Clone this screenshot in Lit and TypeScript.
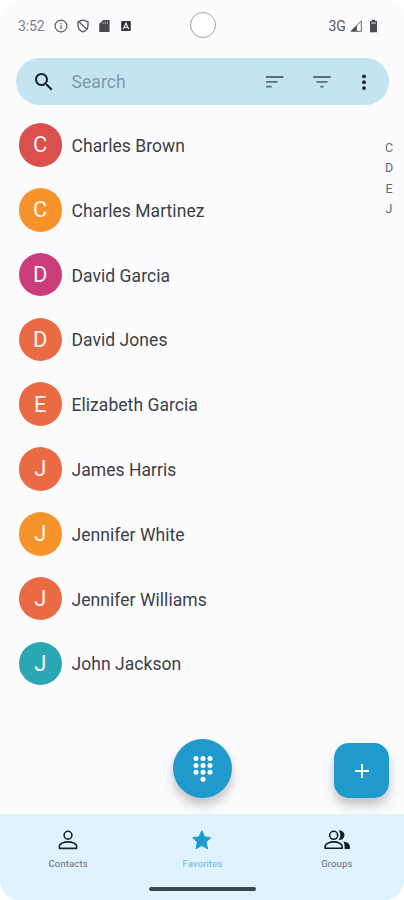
import { LitElement, html, css, svg } from "lit";
import { customElement } from "lit/decorators.js";

interface Contact {
  name: string;
  color: string;
}

const CONTACTS: Contact[] = [
  { name: "Charles Brown", color: "#d9504f" },
  { name: "Charles Martinez", color: "#f6932b" },
  { name: "David Garcia", color: "#cb3c7b" },
  { name: "David Jones", color: "#e96a43" },
  { name: "Elizabeth Garcia", color: "#e96a43" },
  { name: "James Harris", color: "#e96a43" },
  { name: "Jennifer White", color: "#f6932b" },
  { name: "Jennifer Williams", color: "#e96a43" },
  { name: "John Jackson", color: "#2ba6b3" },
];

const KEYPAD = [0, 1, 2].flatMap((r) => [0, 1, 2].map((c) => [4 + c * 7, 3.5 + r * 6.9]));

@customElement("status-bar")
class StatusBar extends LitElement {
  static styles = css`
    :host {
      display: grid;
      grid-template-columns: 1fr 26px 1fr;
      align-items: center;
      height: 50px;
      padding: 0 25px 0 18px;
      font: 14px Roboto, sans-serif;
      color: #808084;
    }
    .left, .right { display: flex; align-items: center; padding-top: 1px; }
    .left svg { display: block; }
    .time { width: 36px; letter-spacing: -0.1px; }
    .icons { display: flex; gap: 7.6px; }
    .right { justify-content: flex-end; color: #56565a; margin-right: 1px; }
    .net { margin-right: 4.500px; letter-spacing: -0.200px; }
    .signal { margin-right: 7px; }
    .camera {
      box-sizing: border-box;
      width: 26px;
      height: 26px;
      border: 1px solid #a2a2a5;
      border-radius: 50%;
      background: #fff;
    }
    :host { grid-template-columns: 172px 26px 1fr; }
  `;
  render() {
    return html`
      <div class="left">
        <span class="time">3:52</span>
        <span class="icons">
          <svg width="14" height="14" viewBox="0 0 14 14" fill="none" stroke="#5c5c60" stroke-width="1.2">
            <circle cx="7" cy="7" r="5.9" /><path d="M7 6.3V10M7 3.9v1.3" />
          </svg>
          <svg width="14" height="14" viewBox="0 0 14 14" fill="none" stroke="#55555a" stroke-width="1.3">
            <path d="M7 1L12 2.8V6.6C12 9.6 9.8 12 7 13C4.2 12 2 9.6 2 6.6V2.8ZM3 2.8L11 10.6" />
          </svg>
          <svg width="14" height="14" viewBox="0 0 14 14">
            <path fill="#4a4a4e" d="M6 1h5.6c.6 0 1 .4 1 1v10c0 .6-.4 1-1 1H3.200c-.6 0-1-.4-1-1V5z" />
            <path stroke="#a5a5a8" stroke-width=".9" d="M6 2.700v2.300M8.200 2.700v2.300M10.400 2.700v2.300" />
          </svg>
          <svg width="14" height="14" viewBox="0 0 14 14">
            <rect x="2.200" y="2" width="9.600" height="10" rx="1" fill="#333337" />
            <path d="M4.300 10.200L7 4l2.700 6.200M5.200 8.300h3.600" fill="none" stroke="#e6e6e8" stroke-width="1.200" />
          </svg>
        </span>
      </div>
      <div class="camera"></div>
      <div class="right">
        <span class="net">3G</span>
        <svg class="signal" width="12" height="12" viewBox="0 0 12 12">
          <path d="M11.300 .9V11.300H1Z" fill="none" stroke="#66666a" stroke-width="1" />
          <path d="M6.800 5.500V11.300H1Z" fill="#4a4a4e" />
        </svg>
        <svg width="9" height="14" viewBox="0 0 9 14">
          <path d="M2.800 .7h3.400V2H8v11.200H1V2h1.800z" fill="#4a4a4e" />
          <path d="M2.200 3.300h4.600v1.400H2.200z" fill="#bcbcbf" />
        </svg>
      </div>
    `;
  }
}

@customElement("search-bar")
class SearchBar extends LitElement {
  static styles = css`
    :host {
      display: flex;
      align-items: center;
      height: 47px;
      margin: 0 15px 0 16px;
      padding: 0 13.500px 0 15.500px;
      box-sizing: border-box;
      border-radius: 24px;
      background: #c3e4f0;
      font-family: Roboto, sans-serif;
    }
    svg { display: block; flex: none; }
    .hint { flex: 1; margin-left: 16px; font-size: 17.500px; color: #7d9ba8; letter-spacing: 0.100px; padding-top: 1px; }
    .filter { margin: 0 17.500px 0 23.500px; }
  `;
  render() {
    return html`
      <svg width="24" height="24" viewBox="0 0 24 24" fill="#17232b">
        <path d="M15.500 14h-.79l-.28-.27C15.410 12.590 16 11.110 16 9.500 16 5.910 13.090 3 9.500 3S3 5.910 3 9.500 5.910 16 9.500 16c1.610 0 3.090-.59 4.230-1.570l.27.28v.79l5 4.990L20.490 19l-4.990-5zm-6 0C7.010 14 5 11.990 5 9.500S7.010 5 9.500 5 14 7.010 14 9.500 11.990 14 9.500 14z" />
      </svg>
      <span class="hint">Search</span>
      <svg width="24" height="24" viewBox="0 0 24 24" fill="#56717e">
        <path d="M3 6h17.500v2H3zM3 11h11.500v1.800H3zM3 15.700h5.700v1.800H3z" />
      </svg>
      <svg class="filter" width="24" height="24" viewBox="0 0 24 24" fill="#56717e">
        <path d="M3.200 6h17.600v2H3.200zM6.500 11h11v1.800h-11zM10.300 15.700h3.400v1.800h-3.400z" />
      </svg>
      <svg width="24" height="24" viewBox="0 0 24 24" fill="#17232b">
        <circle cx="12" cy="6.300" r="1.900" /><circle cx="12" cy="12.200" r="1.900" /><circle cx="12" cy="18.100" r="1.900" />
      </svg>
    `;
  }
}

@customElement("contact-row")
class ContactRow extends LitElement {
  static properties = { name: {}, color: {} };
  declare name: string;
  declare color: string;
  static styles = css`
    :host {
      display: flex;
      align-items: center;
      height: 64.800px;
      padding-left: 18.500px;
      font-family: Roboto, sans-serif;
      color: #3c3f46;
    }
    .avatar {
      display: grid;
      place-items: center;
      width: 43.500px;
      height: 43.500px;
      border-radius: 50%;
      color: #fff5f2;
      font-size: 22px;
    }
    .name { margin-left: 9.500px; padding-top: 2px; font-size: 17.500px; letter-spacing: 0.050px; }
  `;
  render() {
    return html`
      <span class="avatar" style="background:${this.color}">${this.name[0]}</span>
      <span class="name">${this.name}</span>
    `;
  }
}

@customElement("nav-bar")
class NavBar extends LitElement {
  static styles = css`
    :host {
      display: flex;
      flex-direction: column;
      align-items: center;
      height: 86px;
      background: #dff2ff;
      font-family: Roboto, sans-serif;
    }
    .tabs { display: grid; grid-template-columns: repeat(3, 1fr); width: 100%; height: 73px; padding-left: 1px; box-sizing: border-box; }
    .tab {
      display: flex;
      flex-direction: column;
      align-items: center;
      padding-top: 13px;
      gap: 4px;
      font-size: 9.500px;
      line-height: 14px;
      letter-spacing: 0.150px;
      color: #626f78;
    }
    .tab.active { color: #6db7da; }
    svg { display: block; overflow: visible; }
    .handle { width: 107px; height: 3.500px; border-radius: 2px; background: #3c464e; margin-left: 1px; }
  `;
  render() {
    return html`
      <div class="tabs">
        <div class="tab">
          <svg width="26" height="26" viewBox="0 0 26 26" fill="none" stroke="#1b262e" stroke-width="1.600">
            <circle cx="13" cy="8.200" r="3.900" />
            <path d="M4.400 21.400v-2.200c0-2.800 4.700-4.300 8.600-4.300s8.600 1.500 8.600 4.300v2.200z" />
          </svg>
          <span>Contacts</span>
        </div>
        <div class="tab active">
          <svg width="26" height="26" viewBox="0 0 26 26" fill="#209acc" stroke="#209acc" stroke-linejoin="round">
            <path d="M12.800 3.800l2.800 6.100 6.100.7-4.500 4.500 1.300 6.700-5.700-3.400-5.800 3.400 1.300-6.700-4.500-4.500 6.200-.7z" />
          </svg>
          <span>Favorites</span>
        </div>
        <div class="tab">
          <svg width="26" height="26" viewBox="0 0 26 26">
            <g fill="none" stroke="#121c23" stroke-width="1.600">
              <circle cx="9.700" cy="8.300" r="4" />
              <path d="M1.200 21.300v-1.700c0-3 4.700-4.700 8.500-4.700s8.500 1.700 8.500 4.700v1.700z" />
            </g>
            <path fill="#121c23" d="M14.700 3.700c3.200-.6 5.700 1.700 5.700 4.600s-2.500 5.200-5.700 4.600c1-1.300 1.600-2.900 1.600-4.600s-.6-3.300-1.600-4.600zM19.400 14.600c3.600.6 6.500 2.100 6.500 5v2.500h-5.300v-2.800c0-1.900-.6-3.500-1.200-4.700z" />
          </svg>
          <span>Groups</span>
        </div>
      </div>
      <div class="handle"></div>
    `;
  }
}

@customElement("app-root")
class AppRoot extends LitElement {
  static styles = css`
    :host { display: block; background: #fff; }
    .screen {
      position: relative;
      display: flex;
      flex-direction: column;
      height: 900px;
      overflow: hidden;
      border-radius: 20px;
      background: #fcfcfe;
    }
    search-bar { margin-top: 8px; }
    .list { flex: 1; padding-top: 7.600px; }
    .index {
      position: absolute;
      top: 138px;
      right: 8.500px;
      display: flex;
      flex-direction: column;
      align-items: center;
      width: 13px;
      font: 12.500px/20.400px Roboto, sans-serif;
      color: #66686d;
    }
    .fab {
      position: absolute;
      display: grid;
      place-items: center;
      background: #209acc;
      box-shadow: 0 7px 11px rgba(0, 0, 0, 0.230);
    }
    .dial { left: 173px; top: 739px; width: 59px; height: 59px; border-radius: 50%; }
    .add { left: 334px; top: 743px; width: 55px; height: 55px; border-radius: 15px; }
    nav-bar { position: relative; z-index: 1; }
  `;
  render() {
    return html`
      <div class="screen">
        <status-bar></status-bar>
        <search-bar></search-bar>
        <div class="list">
          ${CONTACTS.map((c) => html`<contact-row .name=${c.name} .color=${c.color}></contact-row>`)}
        </div>
        <nav-bar></nav-bar>
        <div class="index">${["C", "D", "E", "J"].map((l) => html`<span>${l}</span>`)}</div>
        <div class="fab dial">
          <svg width="22" height="28" viewBox="0 0 22 28" fill="#fff">
            ${KEYPAD.map(([x, y]) => svg`<circle cx=${x} cy=${y} r="2.500" />`)}
            <circle cx="11" cy="24.200" r="2.500" />
          </svg>
        </div>
        <div class="fab add">
          <svg width="16" height="16" viewBox="0 0 16 16" stroke="#fff" stroke-width="2">
            <path d="M8 1v14M1 8h14" />
          </svg>
        </div>
      </div>
    `;
  }
}
